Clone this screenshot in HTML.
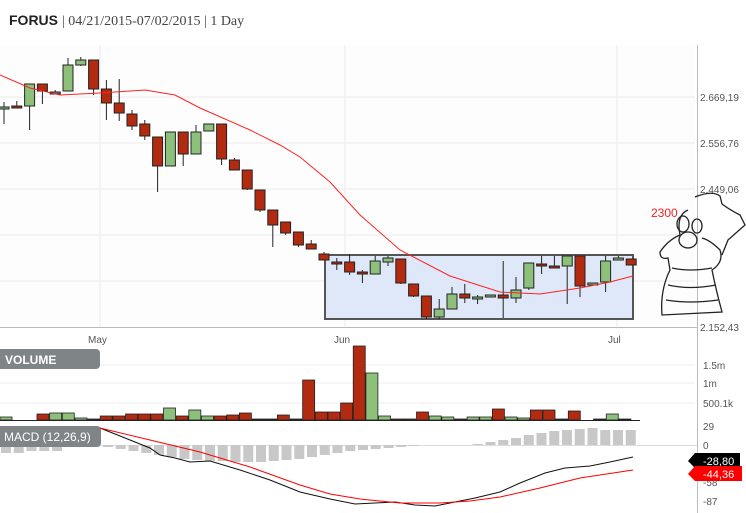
<!DOCTYPE html>
<html><head><meta charset="utf-8"><style>
body{margin:0;background:#fff;width:746px;height:513px;overflow:hidden;font-family:"Liberation Sans",sans-serif}
svg{position:absolute;left:0;top:0}
</style></head><body>
<svg id="s" width="746" height="513" xmlns="http://www.w3.org/2000/svg">
<rect x="0" y="45" width="695" height="282" fill="#fdfdfd"/>
<g stroke="#ececec" stroke-width="1">
<line x1="0" y1="97" x2="695" y2="97"/><line x1="0" y1="143" x2="695" y2="143"/>
<line x1="0" y1="189" x2="695" y2="189"/><line x1="0" y1="235" x2="695" y2="235"/>
<line x1="0" y1="281" x2="695" y2="281"/>
<line x1="100" y1="45" x2="100" y2="327"/><line x1="345" y1="45" x2="345" y2="327"/><line x1="617" y1="45" x2="617" y2="327"/>
<line x1="0" y1="365" x2="695" y2="365"/><line x1="0" y1="383" x2="695" y2="383"/><line x1="0" y1="403" x2="695" y2="403"/>
</g>
<line x1="0" y1="327.5" x2="697" y2="327.5" stroke="#bbb"/>
<line x1="0" y1="445.5" x2="697" y2="445.5" stroke="#ddd"/>
<line x1="697.5" y1="45" x2="697.5" y2="513" stroke="#bbb"/>
<line x1="0" y1="420.5" x2="640" y2="420.5" stroke="#222"/>
<rect x="325" y="255" width="308" height="64" fill="#dfe8f8" stroke="#555" stroke-width="2"/>
<g id="c"></g>
<polyline fill="none" stroke="#f22" stroke-width="1" points="0,75 30,88 60,95 100,93 145,90 175,95 200,108 250,130 280,145 300,157 330,182 360,215 400,250 450,276 500,292 540,294 580,288 610,282 633,276"/>
<g font-size="10" fill="#555">
<text x="700" y="101">2.669,19</text><text x="700" y="147">2.556,76</text><text x="700" y="193">2.449,06</text><text x="700" y="331">2.152,43</text>
<text x="88" y="343">May</text><text x="334" y="343">Jun</text><text x="608" y="343">Jul</text>
<text x="703" y="369">1.5m</text><text x="703" y="387">1m</text><text x="703" y="407">500.1k</text>
<text x="703" y="430">29</text><text x="703" y="449">0</text><text x="703" y="486">-58</text><text x="703" y="505">-87</text>
</g>
<path d="M688,461 L695,453 H740 V468 H695 Z" fill="#000"/>
<text x="703" y="465" font-size="11" fill="#fff">-28,80</text>
<path d="M688,474 L695,466 H742 V481 H695 Z" fill="#f00"/>
<text x="703" y="478" font-size="11" fill="#fff">-44,36</text>
<rect x="-5" y="349" width="105" height="20" rx="4" fill="#7f8487"/>
<text x="5" y="364" font-size="12" font-weight="bold" fill="#fff">VOLUME</text>
<rect x="-5" y="426" width="106" height="21" rx="4" fill="#7f8487"/>
<text x="4" y="441" font-size="12" fill="#fff">MACD (12,26,9)</text>
<polyline fill="none" stroke="#111" stroke-width="1" points="100,428 130,440 150,448 160,455 175,458 190,462 210,461 240,470 270,480 300,492 330,499 355,504 375,503 395,502 415,505 435,506 455,502 475,498 500,492 520,483 545,473 565,468 590,466 610,462 633,457"/>
<polyline fill="none" stroke="#f00" stroke-width="1" points="100,428 150,440 200,452 250,467 300,485 330,494 360,499 400,503 440,503 470,501 500,497 540,488 580,478 633,470"/>
<text x="9" y="25" font-size="14" font-weight="bold" fill="#222">FORUS</text>
<text x="62" y="25" font-size="14" font-family="Liberation Serif,serif" fill="#444">| 04/21/2015-07/02/2015 | 1 Day</text>
<text x="651" y="217" font-size="12" fill="#e22">2300</text>
<g fill="none" stroke="#222" stroke-width="1.3">
<path d="M695,197 Q712,190 720,196 L722,204 Q730,210 740,215 L745,225 L728,240 L722,255"/>
<path d="M688,210 Q676,215 680,235 Q668,240 660,252 Q660,260 668,258 L670,270 Q660,290 662,315 L722,312 Q716,290 712,270 Q724,262 720,250 Q710,240 702,238"/>
<ellipse cx="688" cy="240" rx="9" ry="8"/><ellipse cx="683" cy="224" rx="6" ry="8"/><ellipse cx="697" cy="226" rx="5" ry="7"/>
<path d="M672,268 Q690,272 712,268 M668,285 Q690,290 716,285 M666,300 Q690,304 718,300"/>
</g>
</svg>
<script>
var C=[[0,107,108,102,124],[1,106,108,101,108],[0,84,106,85,130],[1,84,91,84,104],[2,92,92,90,93],[0,65,91,58,91],[0,60,65,57,66],[1,60,89,60,95],[1,89,103,80,120],[1,103,113,79,121],[1,114,126,110,130],[1,124,136,120,140],[1,137,166,137,192],[0,132,166,132,166],[1,132,154,132,166],[0,132,154,125,154],[0,124,131,124,131],[1,124,159,124,165],[1,160,170,158,170],[1,170,189,170,190],[1,190,210,190,212],[1,210,225,210,247],[1,222,233,222,235],[1,232,245,232,247],[1,244,249,240,249],[1,254,260,252,260],[1,262,264,258,270],[1,262,272,254,275],[1,272,274,270,283],[0,261,274,256,274],[0,258,262,256,266],[1,259,283,259,284],[1,284,296,284,297],[1,296,317,296,319],[0,309,317,299,319],[0,294,309,287,309],[1,294,298,284,303],[0,297,299,295,304],[0,295,297,295,297],[1,295,298,261,318],[0,290,298,277,303],[0,263,288,263,290],[1,264,266,256,274],[1,266,268,256,268],[0,256,266,256,304],[1,256,286,256,297],[0,283,285,283,285],[0,261,282,256,292],[0,258,259,256,260],[1,259,265,259,265]];
var V=[3,0,6,7,7,2,1,4,4,6,6,6,12,4,10,4,4,5,7,1,1,5,1,40,8,8,17,74,47,4,1,1,8,4,3,1,3,3,11,3,2,10,10,1,9,0,1,6,1];
var VC=[0,2,1,0,0,0,2,1,1,1,1,1,0,1,0,0,1,1,1,2,2,1,2,1,1,1,1,1,0,0,1,1,1,0,0,2,0,0,1,0,0,1,1,2,1,0,2,0,2];
var D=[8,8,6,6,6,0,0,0,2,4,6,8,10,12,14,15,16,16,17,17,17,16,15,14,12,10,8,6,5,4,3,2,1,0,0,0,0,-1,-3,-5,-7,-10,-12,-14,-15,-16,-17,-15,-15,-15,-15];
var g='',s=12.8;
for(var i=0;i<C.length;i++){var c=C[i],x=4+s*i;
var col=c[0]==0?'#8dc07a':(c[0]==1?'#b22a10':'#888');
g+='<line x1="'+x+'" y1="'+c[3]+'" x2="'+x+'" y2="'+c[4]+'" stroke="#222"/>';
g+='<rect x="'+(x-5)+'" y="'+c[1]+'" width="10" height="'+Math.max(c[2]-c[1],2)+'" fill="'+col+'" stroke="#222" stroke-width="1"/>';}
for(var i=0;i<V.length;i++){var x;if(i==0)x=0;else if(i==1)continue;else x=37+12.65*(i-2);
if(V[i]>0){var col=VC[i]==0?'#8dc07a':(VC[i]==1?'#b22a10':'#333');g+='<rect x="'+x+'" y="'+(420-V[i])+'" width="12" height="'+V[i]+'" fill="'+col+'" stroke="#222" stroke-width="0.8"/>';}}
for(var i=0;i<D.length;i++){var x=1+12.75*i,h=D[i];if(x>630)break;if(h>0)g+='<rect x="'+x+'" y="445" width="10" height="'+h+'" fill="#c8c8c8"/>';else if(h<0)g+='<rect x="'+x+'" y="'+(445+h)+'" width="10" height="'+(-h)+'" fill="#c8c8c8"/>';}
document.getElementById('c').innerHTML=g;
</script>
</body></html>
